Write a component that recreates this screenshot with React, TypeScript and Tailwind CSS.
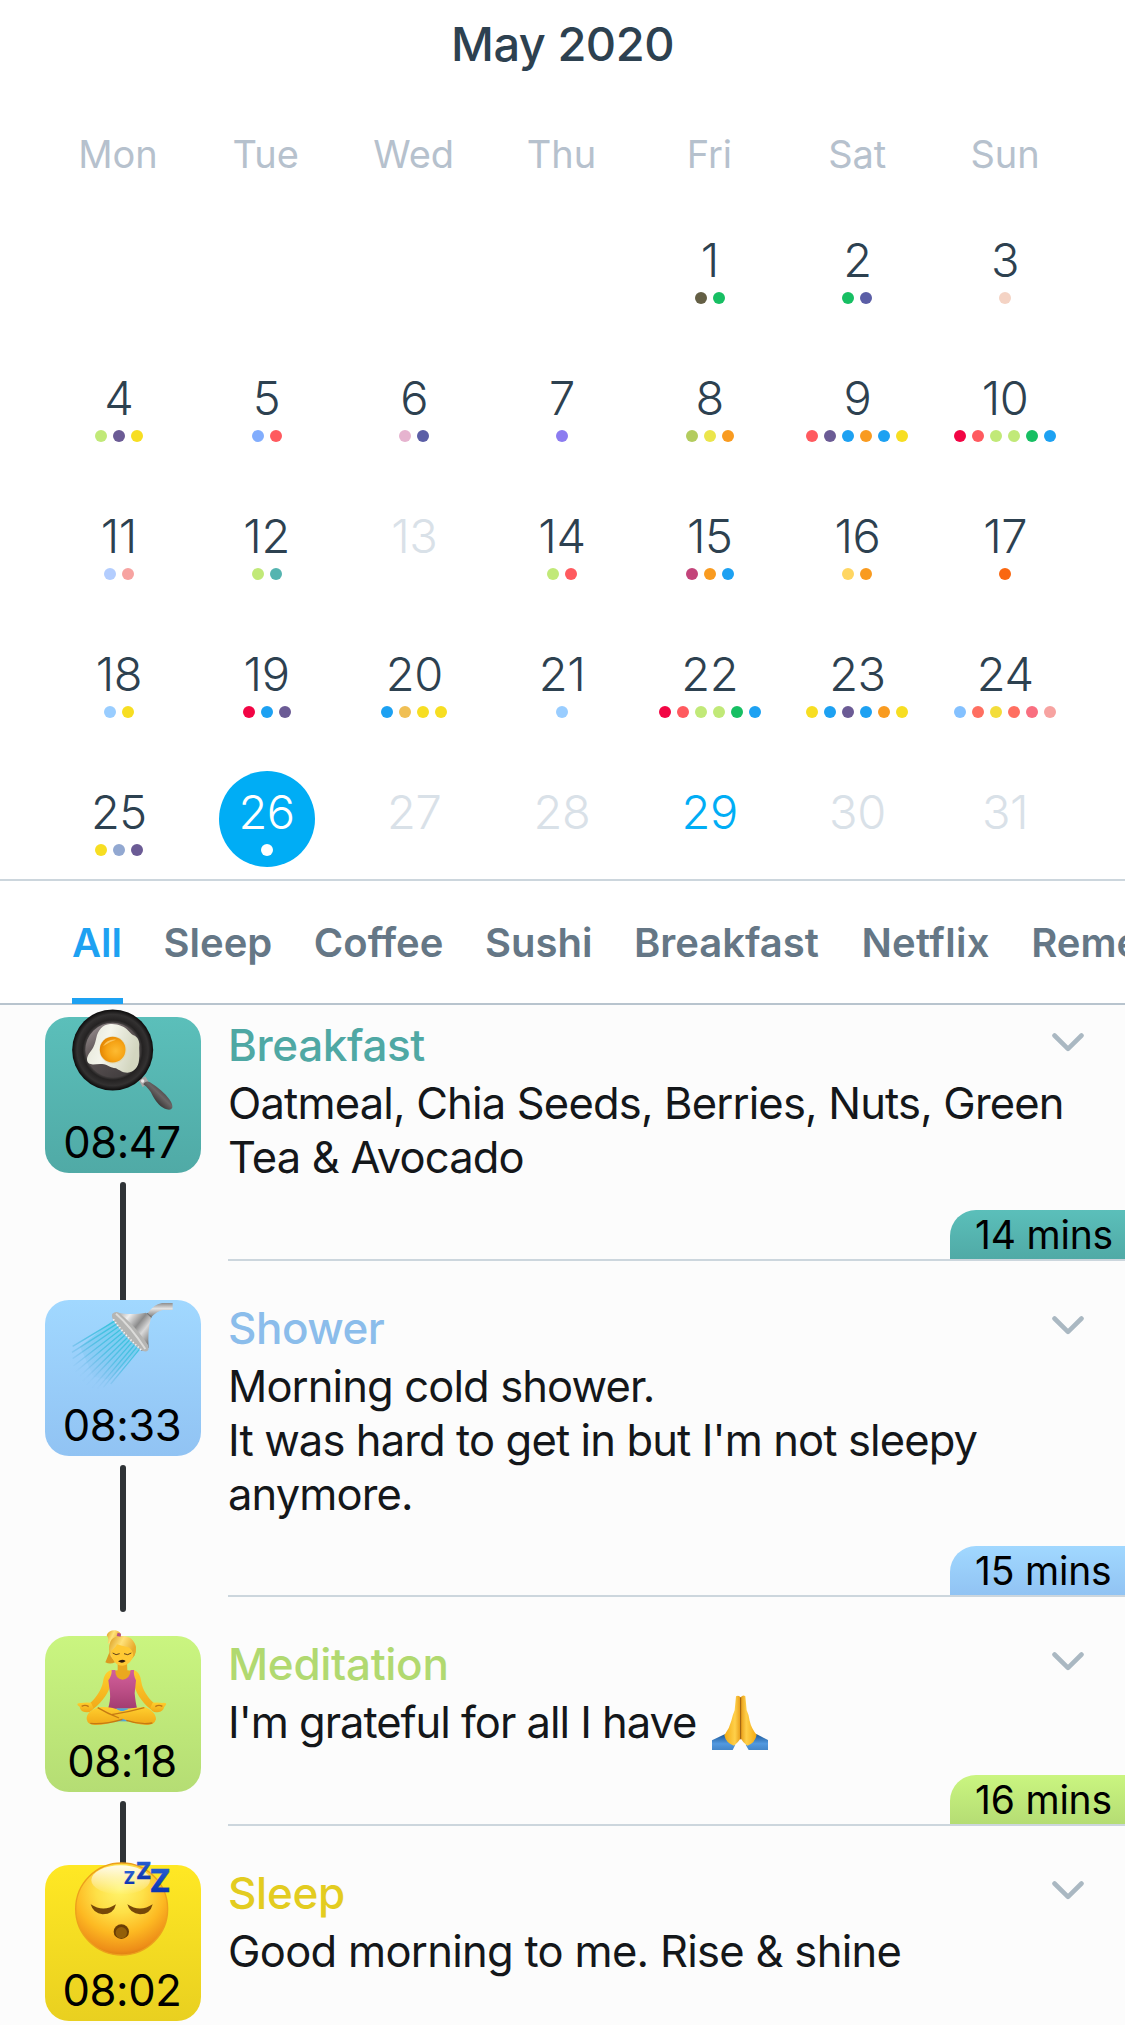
import type { ReactNode } from "react";

const weekdays = ["Mon", "Tue", "Wed", "Thu", "Fri", "Sat", "Sun"];

const blue = "#1da1f2";
const lime = "#c1e978";
const green = "#17bf63";
const purple = "#6b5b95";
const yellow = "#f7de22";
const coral = "#ff5a5f";
const orange = "#f99b20";
const red = "#f20544";
const sky = "#99cdff";
const indigo = "#5b5ea6";

const dots: Record<number, string[]> = {
  1: ["#645f45", green],
  2: [green, indigo],
  3: ["#f4d3c4"],
  4: [lime, purple, yellow],
  5: ["#82adfd", coral],
  6: ["#e6b3cf", indigo],
  7: ["#8c7cf0"],
  8: ["#b3cc5e", "#ebe54b", orange],
  9: [coral, purple, blue, orange, blue, yellow],
  10: [red, coral, lime, lime, green, blue],
  11: ["#b3cdfe", "#f7a3a1"],
  12: [lime, "#55b4b0"],
  14: [lime, coral],
  15: ["#c3447a", orange, blue],
  16: ["#ffd662", orange],
  17: ["#fa6710"],
  18: [sky, yellow],
  19: [red, blue, purple],
  20: [blue, "#f0bf54", yellow, yellow],
  21: [sky],
  22: [red, coral, lime, lime, green, blue],
  23: [yellow, blue, purple, blue, orange, yellow],
  24: ["#84c1ff", "#ff6f61", "#f3dd3a", "#ff6f61", "#f96f80", "#f7a3a1"],
  25: [yellow, "#92a8d1", purple],
  26: ["#ffffff"],
};

const disabled = new Set([13, 27, 28, 30, 31]);

function dayColor(day: number) {
  if (day === 26) return "text-white";
  if (day === 29) return "text-[#00adf5]";
  if (disabled.has(day)) return "text-[#d9e1e8]";
  return "text-[#2d4150]";
}

function Day({ day }: { day: number | null }) {
  if (day === null) return <div className="h-24" />;
  return (
    <div
      className={`flex size-24 flex-col items-center justify-self-center rounded-full pt-[13px] ${
        day === 26 ? "bg-[#00adf5]" : ""
      }`}
    >
      <span className={`text-[47px] font-light leading-[56px] tracking-[-0.4px] ${dayColor(day)}`}>{day}</span>
      <div className="mt-1 flex gap-1.5">
        {(dots[day] ?? []).map((color, i) => (
          <span key={i} className="size-3 shrink-0 rounded-full" style={{ backgroundColor: color }} />
        ))}
      </div>
    </div>
  );
}

function PanIcon() {
  return (
    <svg className="absolute inset-0 size-full overflow-visible" viewBox="45 51 468 468">
      <defs>
        <radialGradient id="panRim" cx="50%" cy="50%" r="50%">
          <stop offset="0.66" stopColor="#4a4646" />
          <stop offset="0.74" stopColor="#242222" />
          <stop offset="0.88" stopColor="#333131" />
          <stop offset="1" stopColor="#0c0b0b" />
        </radialGradient>
        <linearGradient id="panFloor" x1="0" y1="0" x2="0.7" y2="1">
          <stop offset="0" stopColor="#a59c9d" />
          <stop offset="0.45" stopColor="#5d5455" />
          <stop offset="1" stopColor="#413d3e" />
        </linearGradient>
        <linearGradient id="eggWhite" x1="0" y1="0" x2="1" y2="0.3">
          <stop offset="0" stopColor="#e3e5d6" />
          <stop offset="0.45" stopColor="#f4f5ec" />
          <stop offset="1" stopColor="#d3d6c0" />
        </linearGradient>
        <radialGradient id="yolk" cx="62%" cy="55%" r="60%">
          <stop offset="0" stopColor="#fdbb32" />
          <stop offset="0.6" stopColor="#f6a315" />
          <stop offset="1" stopColor="#e58704" />
        </radialGradient>
        <linearGradient id="panHandle" x1="0" y1="1" x2="1" y2="0">
          <stop offset="0.3" stopColor="#2f2c2c" />
          <stop offset="0.55" stopColor="#6a6565" />
          <stop offset="0.8" stopColor="#3a3737" />
        </linearGradient>
      </defs>
      <path d="M326 240 L346 229 L356 246 L338 262Z" fill="#a9a5a5" />
      <circle cx="338" cy="243" r="5" fill="#eceaea" />
      <path
        d="M340 253 C345 243 353 243 360 247 C385 262 405 280 418 298 Q428 312 427 323 Q423 332 410 328 C392 322 378 306 368 287 C361 272 352 262 340 253Z"
        fill="url(#panHandle)"
      />
      <circle cx="248" cy="150" r="121.500" fill="url(#panRim)" />
      <circle cx="248" cy="150" r="82" fill="url(#panFloor)" />
      <path
        d="M240 72 C218 74 204 90 199 113 C195 133 190 144 180 157 C170 170 168 182 176 190 C187 197 201 190 216 192 C234 193 240 204 258 205 C268 210 276 218 292 218 C313 217 325 201 327 181 C330 163 326 148 328 132 C327 116 318 108 309 105 C297 98 291 84 276 79 C264 73 252 71 240 72Z"
        fill="url(#eggWhite)"
      />
      <circle cx="249" cy="150" r="41" fill="#dfd9ac" opacity="0.6" />
      <circle cx="248" cy="149" r="38.500" fill="url(#yolk)" />
      <path d="M219 139 Q231 117 258 119 Q239 124 219 139Z" fill="#fbc55c" />
    </svg>
  );
}

function ShowerIcon() {
  const streams = [
    [253, 124, 128, 199],
    [258, 133, 126, 217],
    [264, 141, 128, 236],
    [270, 150, 130, 258],
    [277, 158, 136, 276],
    [284, 166, 150, 288],
    [291, 174, 158, 304],
    [298, 181, 170, 314],
    [305, 188, 186, 324],
    [313, 195, 202, 326],
    [320, 202, 220, 322],
    [328, 208, 242, 312],
  ];
  return (
    <svg className="absolute inset-0 size-full overflow-visible" viewBox="45 60 468 468">
      <defs>
        <linearGradient id="water" gradientUnits="userSpaceOnUse" x1="290" y1="155" x2="178" y2="300">
          <stop offset="0" stopColor="#37c3dc" />
          <stop offset="0.5" stopColor="#45bce0" stopOpacity="0.75" />
          <stop offset="1" stopColor="#62abdc" stopOpacity="0.05" />
        </linearGradient>
        <linearGradient id="steel" x1="0" y1="0" x2="1" y2="0.8">
          <stop offset="0" stopColor="#8e8e8e" />
          <stop offset="0.3" stopColor="#efefef" />
          <stop offset="0.55" stopColor="#8b8b8b" />
          <stop offset="0.72" stopColor="#d9d9d9" />
          <stop offset="1" stopColor="#6d6d6d" />
        </linearGradient>
        <linearGradient id="pipe" x1="0" y1="0" x2="0" y2="1">
          <stop offset="0" stopColor="#8d8d8d" />
          <stop offset="0.4" stopColor="#e4e4e4" />
          <stop offset="1" stopColor="#7d7d7d" />
        </linearGradient>
      </defs>
      <path d="M250 120 L330 205 L240 300 L190 290 L150 200Z" fill="url(#water)" opacity="0.35" />
      {streams.map(([x1, y1, x2, y2], i) => (
        <line key={i} x1={x1} y1={y1} x2={x2} y2={y2} stroke="url(#water)" strokeWidth="4" />
      ))}
      <path d="M352 101 Q370 73 396 69 L428 69 L428 90 L398 90 Q380 95 364 111Z" fill="url(#pipe)" />
      <path d="M352 98 L366 110 L361 118 L347 105Z" fill="#777" />
      <path d="M262 98 C293 104 324 102 348 98 L363 113 C355 140 354 170 356 203 L335 213 L248 112Z" fill="url(#steel)" />
      <path
        d="M247 101 Q256 93 267 98 Q283 111 303 131 Q330 158 354 195 Q359 211 350 214 Q341 216 332 209 C309 193 276 156 252 123 Q243 110 247 101Z"
        fill="#b5b5b3"
      />
      <path d="M258 101 Q302 139 346 207" stroke="#dcdcda" strokeWidth="6" fill="none" />
      <path d="M250 118 Q286 168 334 209" stroke="#f5f5f5" strokeWidth="5" strokeDasharray="4 6" fill="none" />
    </svg>
  );
}

function MeditationIcon() {
  return (
    <svg className="absolute inset-0 size-full overflow-visible" viewBox="45 78 468 468">
      <defs>
        <linearGradient id="skin" x1="0" y1="0" x2="0" y2="1">
          <stop offset="0" stopColor="#ffcf2e" />
          <stop offset="1" stopColor="#f0a818" />
        </linearGradient>
        <linearGradient id="hair" x1="0" y1="0" x2="1" y2="0.4">
          <stop offset="0" stopColor="#d99a1c" />
          <stop offset="0.5" stopColor="#ffe27a" />
          <stop offset="1" stopColor="#e8ab2b" />
        </linearGradient>
        <linearGradient id="top" x1="0" y1="0" x2="0" y2="1">
          <stop offset="0" stopColor="#d2609b" />
          <stop offset="0.5" stopColor="#bd4f87" />
          <stop offset="1" stopColor="#a23c70" />
        </linearGradient>
      </defs>
      <path d="M230 76 Q236 60 257 61 Q275 66 272 78 Q258 82 250 92 Q240 102 233 100 Q239 88 230 76Z" fill="url(#hair)" />
      <path d="M240 122 Q231 145 226 157 Q240 164 255 157Z" fill="#dc9a1f" />
      <path
        d="M246 179 C228 183 221 198 219 216 C214 240 200 260 183 277 L166 291 L181 303 C207 286 232 257 241 227Z"
        fill="url(#skin)"
      />
      <path
        d="M309 179 C326 183 332 198 334 216 C338 240 352 260 369 277 L384 291 L370 303 C344 286 321 257 313 227Z"
        fill="url(#skin)"
      />
      <path
        d="M183 278 Q165 276 154 279 Q139 278 143 286 Q151 290 151 297 Q156 307 171 307 Q187 306 190 293Z"
        fill="url(#skin)"
      />
      <path
        d="M368 278 Q386 276 397 279 Q411 277 408 284 Q401 291 400 298 Q393 308 379 307 Q364 306 361 293Z"
        fill="url(#skin)"
      />
      <path d="M155 289 Q166 283 176 290 M397 289 Q386 283 376 290" stroke="#bd7616" strokeWidth="4" fill="none" />
      <path d="M263 160 L291 160 L292 181 L310 183 L304 214 L250 214 L246 183 L263 181Z" fill="#eaa81f" />
      <path
        d="M245 180 L256 180 Q255 207 278 209 Q300 207 302 180 L312 180 Q310 197 318 211 L314 250 Q317 280 321 295 L234 297 Q242 270 240 249 L235 211 Q246 196 245 180Z"
        fill="url(#top)"
      />
      <circle cx="277" cy="119" r="40" fill="url(#hair)" />
      <path d="M243 122 Q249 96 285 97 Q311 103 311 128 Q310 149 293 162 Q276 173 259 161 Q243 148 243 122Z" fill="#ffc934" />
      <path d="M239 124 Q233 78 273 78 Q311 77 318 112 Q318 134 311 140 Q309 120 295 112 Q274 108 261 103 Q255 117 239 124Z" fill="url(#hair)" />
      <path d="M248 129 Q258 138 269 131 M282 131 Q293 138 304 129" stroke="#62411b" strokeWidth="3" fill="none" />
      <path d="M264 154 Q276 145 287 153 Q277 163 264 154Z" fill="#321b0c" />
      <path d="M263 68 L273 71 L272 80 L260 78Z" fill="#b75184" />
      <path d="M260 295 L294 295 L294 334 L260 334Z" fill="#53a4d5" />
      <path
        d="M205 292 C179 301 169 314 170 328 Q173 345 195 345 Q231 345 267 331 L310 310 Q297 300 274 304 Q243 288 205 292Z"
        fill="url(#skin)"
      />
      <path
        d="M346 292 C367 301 379 315 378 328 Q373 345 352 345 Q315 343 289 331 L238 310 Q258 305 278 304 Q310 290 346 292Z"
        fill="url(#skin)"
      />
      <path d="M203 293 Q231 310 267 324 M245 314 Q297 306 343 293 M181 340 Q225 344 277 328 M289 331 Q330 345 367 339" stroke="#c57a13" strokeWidth="4" fill="none" />
    </svg>
  );
}

function SleepIcon() {
  return (
    <svg className="absolute inset-0 size-full overflow-visible" viewBox="45 75 468 468">
      <defs>
        <radialGradient id="face" cx="48%" cy="28%" r="75%">
          <stop offset="0" stopColor="#fff56f" />
          <stop offset="0.35" stopColor="#fee047" />
          <stop offset="0.65" stopColor="#fdb922" />
          <stop offset="0.9" stopColor="#ee8e18" />
          <stop offset="1" stopColor="#d5780f" />
        </radialGradient>
        <linearGradient id="shine" x1="0" y1="0" x2="0" y2="1">
          <stop offset="0" stopColor="#fff" stopOpacity="0.9" />
          <stop offset="1" stopColor="#fff" stopOpacity="0" />
        </linearGradient>
        <linearGradient id="zed" x1="0" y1="0" x2="0" y2="1">
          <stop offset="0" stopColor="#2d69d9" />
          <stop offset="1" stopColor="#0528a8" />
        </linearGradient>
      </defs>
      <circle cx="275" cy="207" r="138" fill="url(#face)" stroke="#eda01c" strokeWidth="4" />
      <ellipse cx="272" cy="120" rx="88" ry="44" fill="url(#shine)" />
      <path d="M182 193 Q220 218 258 193 Q251 223 218 223 Q190 221 182 193Z" fill="#764808" />
      <path d="M292 193 Q330 218 368 193 Q361 223 330 223 Q300 221 292 193Z" fill="#764808" />
      <ellipse cx="274" cy="275" rx="23" ry="22" fill="#6a3e05" />
      <ellipse cx="274" cy="278" rx="17" ry="17" fill="#935f08" />
      <g fill="url(#zed)" stroke="url(#zed)" fontFamily="Inter, sans-serif" fontWeight="800" textAnchor="middle">
        <text x="298" y="133" fontSize="50" strokeWidth="0.5">Z</text>
        <text x="341" y="117" fontSize="68" strokeWidth="1">Z</text>
        <text x="390" y="156" fontSize="93" strokeWidth="1">Z</text>
      </g>
    </svg>
  );
}

function PrayingHands() {
  return (
    <svg className="-mt-2 ml-4 inline-block h-14 w-14 align-[-12px]" viewBox="96 102 168 168">
      <defs>
        <linearGradient id="handL" x1="0" y1="0" x2="1" y2="0">
          <stop offset="0" stopColor="#f1a912" />
          <stop offset="0.65" stopColor="#ffd04a" />
          <stop offset="1" stopColor="#e79c17" />
        </linearGradient>
        <linearGradient id="handR" x1="1" y1="0" x2="0" y2="0">
          <stop offset="0" stopColor="#f1a912" />
          <stop offset="0.65" stopColor="#ffd04a" />
          <stop offset="1" stopColor="#e79c17" />
        </linearGradient>
        <linearGradient id="cuff" x1="0" y1="0" x2="0" y2="1">
          <stop offset="0" stopColor="#1c5796" />
          <stop offset="0.6" stopColor="#5299e0" />
          <stop offset="1" stopColor="#4486c9" />
        </linearGradient>
      </defs>
      <path d="M96 241 L134 223 L166 254 L158 270 L96 270Z" fill="url(#cuff)" />
      <path d="M264 240 L229 222 L197 254 L206 270 L264 270Z" fill="url(#cuff)" />
      <path d="M182 112 Q176 104 168 109 L164 151 Q158 165 154 182 Q148 206 133 226 Q138 250 162 257 Q174 249 182 235Z" fill="url(#handL)" />
      <path d="M182 112 Q189 103 196 109 L200 151 Q207 165 209 182 Q214 205 230 224 Q226 248 202 257 Q189 249 182 235Z" fill="url(#handR)" />
      <path d="M182 112 L182 238" stroke="#96580b" strokeWidth="3" />
    </svg>
  );
}

type Entry = {
  title: string;
  titleClass: string;
  time: string;
  fill: string;
  height: string;
  body: ReactNode;
  bodyClass: string;
  line?: string;
  duration?: string;
  icon: ReactNode;
};

const entries: Entry[] = [
  {
    title: "Breakfast",
    titleClass: "text-[#4fa8a4] tracking-[-0.4px]",
    time: "08:47",
    fill: "bg-linear-to-b from-[#5bbfba] to-[#50aaa6]",
    height: "h-[244px]",
    body: (
      <>
        Oatmeal, Chia Seeds, Berries, Nuts, Green
        <br />
        Tea &amp; Avocado
      </>
    ),
    bodyClass: "tracking-[-0.82px]",
    line: "h-[118px]",
    duration: "14 mins",
    icon: <PanIcon />,
  },
  {
    title: "Shower",
    titleClass: "text-[#8bbdeb] tracking-[-0.5px]",
    time: "08:33",
    fill: "bg-linear-to-b from-[#a1d8ff] to-[#91c3f3]",
    height: "h-[297px]",
    body: (
      <>
        Morning cold shower.
        <br />
        It was hard to get in but I'm not sleepy
        <br />
        anymore.
      </>
    ),
    bodyClass: "tracking-[-0.88px]",
    line: "h-[147px] rounded-b-full",
    duration: "15 mins",
    icon: <ShowerIcon />,
  },
  {
    title: "Meditation",
    titleClass: "text-[#b1d970] tracking-[-0.3px]",
    time: "08:18",
    fill: "bg-linear-to-b from-[#caf580] to-[#b5dd74]",
    height: "h-[190px]",
    body: (
      <>
        I'm grateful for all I have
        <PrayingHands />
      </>
    ),
    bodyClass: "tracking-[-1.02px]",
    line: "h-[64px]",
    duration: "16 mins",
    icon: <MeditationIcon />,
  },
  {
    title: "Sleep",
    titleClass: "text-[#e3cc20] tracking-[-0.3px]",
    time: "08:02",
    fill: "bg-linear-to-b from-[#ffe824] to-[#e9d020]",
    height: "h-[160px]",
    body: "Good morning to me. Rise & shine",
    bodyClass: "tracking-[-0.7px]",
    icon: <SleepIcon />,
  },
];

function Row({ entry }: { entry: Entry }) {
  return (
    <div className={`flex shrink-0 ${entry.height}`}>
      <div className="flex w-[228px] shrink-0 flex-col pl-[45px]">
        <div className={`relative z-10 size-[156px] shrink-0 rounded-[24px] pt-[100px] pr-[2px] text-center ${entry.fill}`}>
          {entry.icon}
          <span className="relative block text-[43.5px] leading-[50px] tracking-[-0.4px] text-black">{entry.time}</span>
        </div>
        {entry.line && <div className={`ml-[75px] mt-[9px] w-1.5 shrink-0 rounded-t-full bg-[#2f3336] ${entry.line}`} />}
      </div>
      <div className={`flex min-w-0 grow flex-col ${entry.duration ? "border-b-2 border-[#ccd6dd]" : ""}`}>
        <div className="flex items-start justify-between pt-px">
          <h2 className={`text-[44px] font-medium leading-[54px] ${entry.titleClass}`}>{entry.title}</h2>
          <svg className="mr-[41px] mt-[15px] h-[19px] w-8" viewBox="0 0 32 19" fill="none">
            <path d="M2.500 2.500 L16 15.800 L29.500 2.500" stroke="#aab8c2" strokeWidth="4.600" strokeLinecap="round" strokeLinejoin="round" />
          </svg>
        </div>
        <p className={`mt-1 whitespace-nowrap text-[43.5px] leading-[54px] text-[#14171a] ${entry.bodyClass}`}>{entry.body}</p>
        {entry.duration && (
          <div
            className={`mt-auto h-[49px] w-[175px] self-end rounded-tl-[26px] pl-[25px] text-[39px] leading-[50px] tracking-[-0.2px] text-black ${entry.fill}`}
          >
            {entry.duration}
          </div>
        )}
      </div>
    </div>
  );
}

const tabs = ["All", "Sleep", "Coffee", "Sushi", "Breakfast", "Netflix", "Remember"];

export default function App() {
  const days: (number | null)[] = [null, null, null, null, ...Array.from({ length: 31 }, (_, i) => i + 1)];
  return (
    <div className="flex h-[2025px] w-[1125px] flex-col overflow-hidden bg-white font-['Inter',sans-serif]">
      <header className="pt-[9px] text-center text-[47px] font-medium leading-[70px] tracking-[-0.5px] text-[#2d4150]">
        May 2020
      </header>
      <div className="mt-[51px] grid grid-cols-7 pr-[46px] pl-[44px] text-center text-[38px] leading-[48px] text-[#b6c1cd]">
        {weekdays.map((d) => (
          <div key={d}>{d}</div>
        ))}
      </div>
      <div className="mt-[41px] grid grid-cols-7 gap-y-[42px] pr-[46px] pl-[45px]">
        {days.map((d, i) => (
          <Day key={i} day={d} />
        ))}
      </div>
      <nav className="mt-3 flex h-[126px] shrink-0 gap-[41.5px] border-y-2 border-t-[#ccd6dd] border-b-[#b8c4ce] pl-[72px] text-[40px] font-semibold leading-[123px] text-[#657786]">
        {tabs.map((t, i) => (
          <div
            key={t}
            className={`relative shrink-0 ${i === 0 ? "text-[#1da1f2]" : ""} ${t === "Netflix" ? "ml-px tracking-[0.3px]" : ""}`}
          >
            {t}
            {i === 0 && <span className="absolute -bottom-px left-0 h-1.5 w-[51px] bg-[#1da1f2]" />}
          </div>
        ))}
      </nav>
      <main className="flex grow flex-col gap-[39px] bg-[#fcfcfc] pt-3">
        {entries.map((e) => (
          <Row key={e.title} entry={e} />
        ))}
      </main>
    </div>
  );
}
